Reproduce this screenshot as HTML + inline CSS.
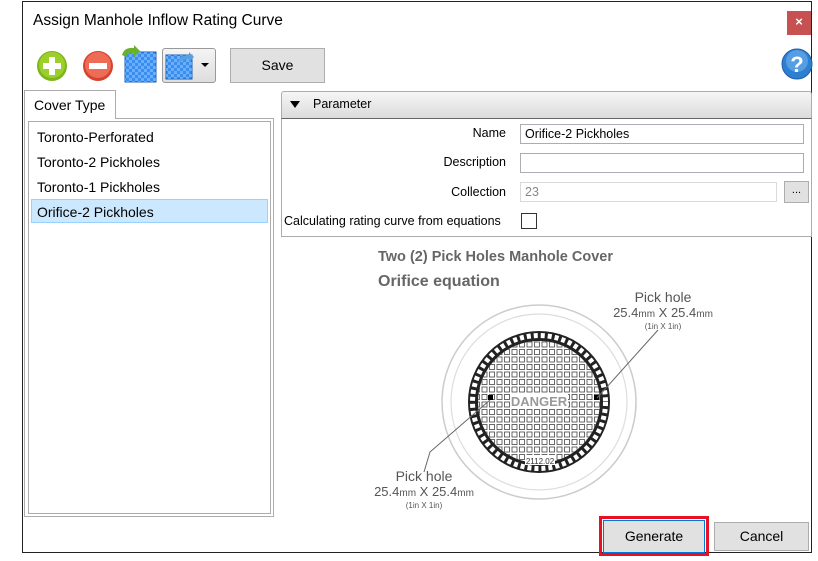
<!DOCTYPE html>
<html><head><style>
body{margin:0;width:818px;height:561px;background:#fff;position:relative;overflow:hidden;font-family:"Liberation Sans",sans-serif;font-size:13.5px;color:#000}
.a{position:absolute}
.inp{position:absolute;border:1px solid #abadb3;background:#fff;height:18px;font-size:12.5px;line-height:18px;padding-left:4px;box-sizing:border-box}
.lbl{position:absolute;right:312px;font-size:12.5px}
.btn{position:absolute;background:#e1e1e1;border:1px solid #adadad;box-sizing:border-box;text-align:center;font-size:14px}
</style></head><body>
<div class="a" style="left:22px;top:2px;width:790px;height:551px;border:1px solid #222;border-top:none;box-sizing:border-box"></div>
<div class="a" style="left:22px;top:1px;width:790px;height:1px;background:#222"></div>
<div class="a" style="left:33px;top:12px;font-size:15.5px">Assign Manhole Inflow Rating Curve</div>
<div class="a" style="left:787px;top:11px;width:24px;height:24px;background:#c75050;color:#fff;text-align:center;line-height:22px;font-size:13px;font-weight:bold">×</div>
<!-- toolbar -->
<svg class="a" style="left:36px;top:50px" width="32" height="32"><circle cx="16" cy="16" r="15" fill="#7cb51c"/><circle cx="16" cy="15" r="13" fill="#9ccf2a"/><rect x="13" y="7" width="6" height="18" fill="#fff"/><rect x="7" y="13" width="18" height="6" fill="#fff"/></svg>
<svg class="a" style="left:82px;top:50px" width="32" height="32"><circle cx="16" cy="16" r="15" fill="#d8412e"/><circle cx="16" cy="15" r="13" fill="#ee6b55"/><rect x="7" y="13" width="18" height="6" fill="#fff"/></svg>
<svg class="a" style="left:120px;top:45px" width="38" height="38"><defs><pattern id="c" width="6" height="6" patternUnits="userSpaceOnUse"><rect width="3" height="3" fill="#9cd0ff"/><rect x="3" y="3" width="3" height="3" fill="#9cd0ff"/></pattern></defs><rect x="5" y="7" width="31" height="30" fill="#3a8ef0" stroke="#1a5fb4"/><path d="M5 7h31v30H5z" fill="url(#c)" opacity=".5"/><path d="M2 10 Q4 2 14 3 L14 0 L20 6 L14 12 L14 8 Q7 7 6 12z" fill="#6ab02a"/></svg>
<div class="a" style="left:162px;top:48px;width:52px;height:33px;border:1px solid #999;border-radius:3px;background:linear-gradient(#f4f4f4,#ddd)"></div>
<svg class="a" style="left:165px;top:50px" width="30" height="30"><rect x="1" y="5" width="26" height="24" fill="#3a8ef0" stroke="#1a5fb4"/><rect x="1" y="5" width="26" height="24" fill="url(#c)" opacity=".5"/><path d="M12 14 Q14 5 24 5 L24 2 L29 7 L24 12 L24 9 Q17 9 12 14z" fill="#5aa0e0"/></svg>
<div class="a" style="left:201px;top:63px;border:4px solid transparent;border-top:4px solid #000;border-bottom:none"></div>
<div class="btn" style="left:230px;top:48px;width:95px;height:35px;line-height:33px">Save</div>
<svg class="a" style="left:781px;top:48px" width="32" height="32"><circle cx="16" cy="16" r="15" fill="#2f7fd1" stroke="#1c5ea8"/><circle cx="16" cy="13" r="11" fill="#6fb3ee" opacity=".6"/><text x="16" y="24" text-anchor="middle" fill="#fff" font-size="22" font-weight="bold" font-family="Liberation Sans">?</text></svg>
<!-- left panel -->
<div class="a" style="left:24px;top:90px;width:92px;height:29px;border:1px solid #acacac;border-bottom:none;background:#fff;box-sizing:border-box;z-index:2;padding:6px 0 0 9px;font-size:14px">Cover Type</div>
<div class="a" style="left:24px;top:118px;width:250px;height:399px;border:1px solid #acacac;box-sizing:border-box"></div>
<div class="a" style="left:28px;top:121px;width:243px;height:393px;border:1px solid #acacac;box-sizing:border-box"></div>
<div class="a" style="left:31px;top:199px;width:237px;height:24px;background:#cce8ff;border:1px solid #99d1ff;box-sizing:border-box"></div>
<div class="a" style="left:37px;top:125px;font-size:14px;line-height:25px">Toronto-Perforated<br>Toronto-2 Pickholes<br>Toronto-1 Pickholes<br>Orifice-2 Pickholes</div>
<!-- parameter -->
<div class="a" style="left:281px;top:91px;width:531px;height:28px;border:1px solid #acacac;border-radius:3px 3px 0 0;box-sizing:border-box;background:linear-gradient(#f6f6f6,#dcdcdc)"></div>
<div class="a" style="left:290px;top:101px;border:5px solid transparent;border-top:7px solid #000;border-bottom:none"></div>
<div class="a" style="left:313px;top:97px;font-size:12.5px">Parameter</div>
<div class="a" style="left:281px;top:118px;width:531px;height:119px;border:1px solid #acacac;border-top:1px solid #666;box-sizing:border-box"></div>
<div class="lbl" style="top:126px">Name</div>
<div class="lbl" style="top:155px">Description</div>
<div class="lbl" style="top:185px">Collection</div>
<div class="a" style="left:284px;top:214px;font-size:12.5px">Calculating rating curve from equations</div>
<div class="inp" style="left:520px;top:124px;width:284px;height:20px">Orifice-2 Pickholes</div>
<div class="inp" style="left:520px;top:153px;width:284px;height:20px"></div>
<div class="inp" style="left:520px;top:182px;width:257px;height:20px;border-color:#d9d9d9;color:#888">23</div>
<div class="btn" style="left:784px;top:181px;width:25px;height:22px;font-size:11px;line-height:16px">...</div>
<div class="a" style="left:521px;top:213px;width:16px;height:16px;border:1px solid #333;box-sizing:border-box"></div>
<!-- image -->
<div class="a" style="left:378px;top:249px;font-size:14.5px;font-weight:bold;color:#666">Two (2) Pick Holes Manhole Cover</div>
<div class="a" style="left:378px;top:273px;font-size:16px;font-weight:bold;color:#666">Orifice equation</div>
<svg class="a" style="left:360px;top:280px" width="380" height="240">
<defs><pattern id="g" width="7.5" height="7.5" patternUnits="userSpaceOnUse" x="0.5" y="0.5"><rect x="1.5" y="1.5" width="5" height="5" fill="none" stroke="#444" stroke-width="0.8"/></pattern></defs>
<circle cx="179" cy="122" r="97" fill="none" stroke="#ccc" stroke-width="1.5"/>
<circle cx="179" cy="122" r="88" fill="none" stroke="#ddd" stroke-width="1.2"/>
<circle cx="179" cy="122" r="71" fill="#222"/>
<circle cx="179" cy="122" r="66.5" fill="none" stroke="#fff" stroke-width="5" stroke-dasharray="4 3"/>
<circle cx="179" cy="122" r="61" fill="#fff"/>
<circle cx="179" cy="122" r="61" fill="url(#g)"/>
<rect x="150" y="113" width="58" height="16" fill="#fff"/>
<text x="179" y="126" text-anchor="middle" font-size="13" fill="#999" font-weight="bold">DANGER</text>
<rect x="128" y="115" width="5" height="5" fill="#000"/><rect x="234" y="115" width="5" height="5" fill="#000"/>
<rect x="165" y="175" width="30" height="10" fill="#fff"/><text x="180" y="184" text-anchor="middle" font-size="8" fill="#333">2112.02</text>
<path d="M130 120 L70 172 L64 192" fill="none" stroke="#666"/>
<path d="M237 118 L298 50" fill="none" stroke="#666"/>
<text x="64" y="201" text-anchor="middle" font-size="14" fill="#555">Pick hole</text>
<text x="64" y="216" text-anchor="middle" font-size="13" fill="#555">25.4<tspan font-size="10">mm</tspan> X 25.4<tspan font-size="10">mm</tspan></text>
<text x="64" y="228" text-anchor="middle" font-size="8" fill="#555">(1in X 1in)</text>
<text x="303" y="22" text-anchor="middle" font-size="14" fill="#555">Pick hole</text>
<text x="303" y="37" text-anchor="middle" font-size="13" fill="#555">25.4<tspan font-size="10">mm</tspan> X 25.4<tspan font-size="10">mm</tspan></text>
<text x="303" y="49" text-anchor="middle" font-size="8" fill="#555">(1in X 1in)</text>
</svg>
<!-- buttons -->
<div class="a" style="left:599px;top:516px;width:110px;height:40px;border:3px solid #e81123;box-sizing:border-box"></div>
<div class="btn" style="left:603px;top:520px;width:102px;height:33px;border-color:#0078d7;line-height:31px">Generate</div>
<div class="btn" style="left:714px;top:522px;width:95px;height:29px;line-height:27px">Cancel</div>
</body></html>
